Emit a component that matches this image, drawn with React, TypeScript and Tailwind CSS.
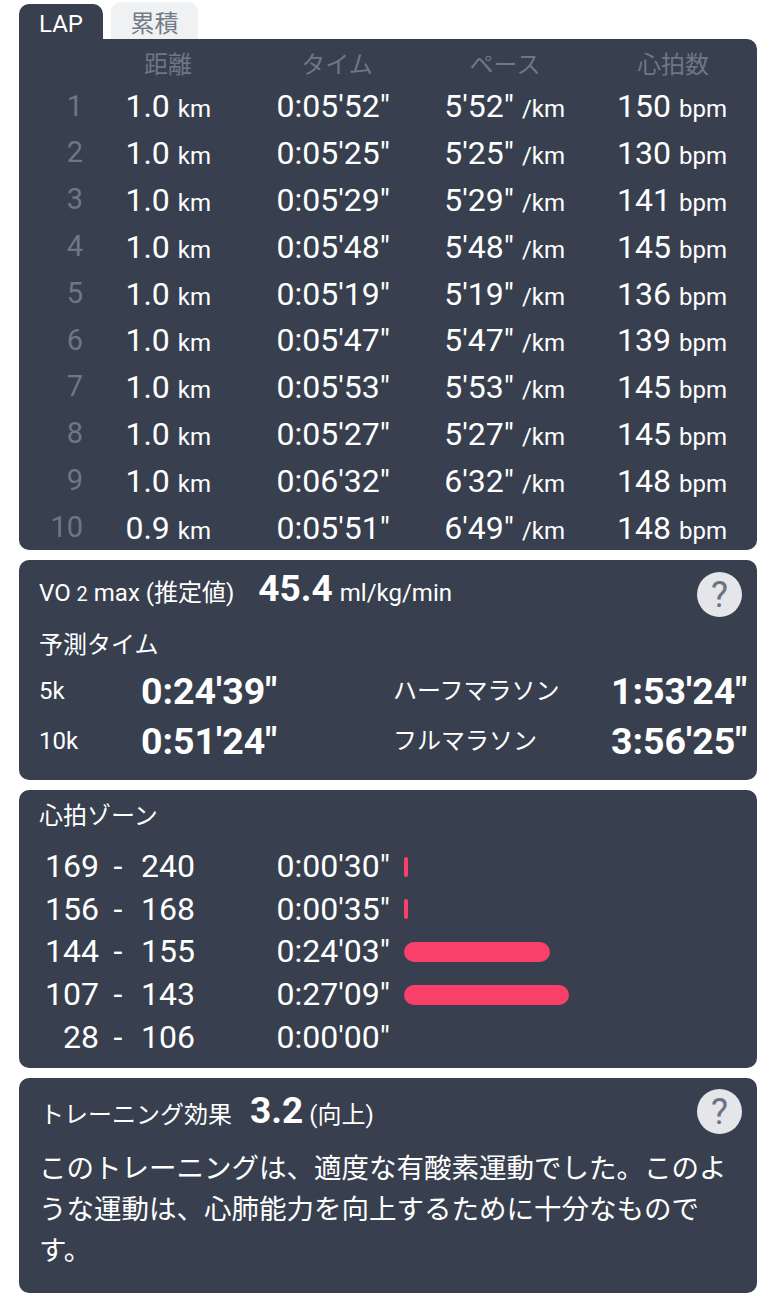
import { FC } from "react";

const laps = [
  ["1", "1.0", "0:05'52\"", "5'52\"", "150"],
  ["2", "1.0", "0:05'25\"", "5'25\"", "130"],
  ["3", "1.0", "0:05'29\"", "5'29\"", "141"],
  ["4", "1.0", "0:05'48\"", "5'48\"", "145"],
  ["5", "1.0", "0:05'19\"", "5'19\"", "136"],
  ["6", "1.0", "0:05'47\"", "5'47\"", "139"],
  ["7", "1.0", "0:05'53\"", "5'53\"", "145"],
  ["8", "1.0", "0:05'27\"", "5'27\"", "145"],
  ["9", "1.0", "0:06'32\"", "6'32\"", "148"],
  ["10", "0.9", "0:05'51\"", "6'49\"", "148"],
];

const zones = [
  { from: "169", to: "240", time: "0:00'30\"", bar: 4 },
  { from: "156", to: "168", time: "0:00'35\"", bar: 4 },
  { from: "144", to: "155", time: "0:24'03\"", bar: 146 },
  { from: "107", to: "143", time: "0:27'09\"", bar: 165 },
  { from: "28", to: "106", time: "0:00'00\"", bar: 0 },
];

const HelpButton: FC = () => (
  <div className="w-[45px] h-[45px] rounded-full bg-[#e4e6ea] flex items-center justify-center text-[36px] leading-none text-[#6b7280]">
    ?
  </div>
);

const App: FC = () => {
  return (
    <div className="w-[776px] h-[1296px] bg-white px-[19px] pt-[2px] overflow-hidden font-['Roboto','Noto_Sans_CJK_JP',sans-serif] text-white">
      {/* tabs */}
      <div className="flex items-end gap-2 h-[37px]">
        <div className="w-[84px] h-[35px] bg-[#383f4e] rounded-t-[10px] text-[24px] leading-[41px] text-center">
          LAP
        </div>
        <div className="w-[87px] h-[37px] bg-[#f0f1f3] rounded-t-[10px] text-[24px] leading-[44px] text-center text-[#737b88]">
          累積
        </div>
      </div>

      {/* lap table */}
      <div className="h-[511px] bg-[#383f4e] rounded-b-[10px] rounded-tr-[10px] pt-[8px]">
        <div className="flex h-[36px] items-center text-[24px] text-[#6d7786]">
          <div className="w-[99px]" />
          <div className="w-[100px] text-center">距離</div>
          <div className="w-[100px] ml-[69px] text-center">タイム</div>
          <div className="w-[100px] ml-[68px] text-center">ペース</div>
          <div className="w-[100px] ml-[68px] text-center">心拍数</div>
        </div>
        {laps.map(([lap, dist, time, pace, hr]) => (
          <div key={lap} className="flex h-[46.8px] items-center text-[32px] whitespace-nowrap">
            <div className="w-[64px] text-right text-[29px] text-[#6d7786]">{lap}</div>
            <div className="w-[128px] text-right">
              {dist} <span className="text-[24px]">km</span>
            </div>
            <div className="w-[179px] text-right">{time}</div>
            <div className="w-[175px] text-right">
              {pace} <span className="text-[24px]">/km</span>
            </div>
            <div className="w-[162px] text-right">
              {hr} <span className="text-[24px]">bpm</span>
            </div>
          </div>
        ))}
      </div>

      {/* VO2 max */}
      <div className="relative h-[220px] mt-[10px] bg-[#383f4e] rounded-[10px] pl-[20px] pt-[1px]">
        <div className="flex items-baseline h-[48px] text-[24px] whitespace-nowrap">
          <span>
            VO <span className="text-[20px]">2</span> max (推定値)
          </span>
          <span className="ml-[24px] text-[37px] font-bold">45.4</span>
          <span className="ml-[7px]">ml/kg/min</span>
        </div>
        <div className="absolute right-[15px] top-[12px]">
          <HelpButton />
        </div>
        <div className="mt-[18px] text-[24px] leading-[36px]">予測タイム</div>
        <div className="mt-[3px] flex h-[50px] items-center whitespace-nowrap">
          <div className="w-[102px] text-[24px]">5k</div>
          <div className="w-[252px] text-[37.5px] font-bold">0:24'39"</div>
          <div className="w-[218px] text-[24px]">ハーフマラソン</div>
          <div className="w-[136px] text-right text-[37.5px] font-bold">1:53'24"</div>
        </div>
        <div className="flex h-[50px] items-center whitespace-nowrap">
          <div className="w-[102px] text-[24px]">10k</div>
          <div className="w-[252px] text-[37.5px] font-bold">0:51'24"</div>
          <div className="w-[218px] text-[24px]">フルマラソン</div>
          <div className="w-[136px] text-right text-[37.5px] font-bold">3:56'25"</div>
        </div>
      </div>

      {/* heart rate zones */}
      <div className="h-[278px] mt-[10px] bg-[#383f4e] rounded-[10px] pl-[20px] pt-[8px]">
        <div className="text-[24px] leading-[36px]">心拍ゾーン</div>
        <div className="mt-[11px]">
          {zones.map((z) => (
            <div key={z.from} className="flex h-[42.6px] items-center text-[32px] whitespace-nowrap">
              <div className="w-[60px] text-right">{z.from}</div>
              <div className="w-[38px] text-center">-</div>
              <div className="w-[58px] text-right">{z.to}</div>
              <div className="w-[195px] text-right">{z.time}</div>
              <div className="ml-[14px] mt-[1px] h-[20px] rounded-[10px] bg-[#f8406a]" style={{ width: z.bar }} />
            </div>
          ))}
        </div>
      </div>

      {/* training effect */}
      <div className="relative h-[215px] mt-[10px] bg-[#383f4e] rounded-[10px] pl-[21px] pr-[20px] pt-[5px]">
        <div className="flex items-baseline h-[48px] text-[24px] whitespace-nowrap">
          <span>トレーニング効果</span>
          <span className="ml-[18px] text-[37px] font-bold">3.2</span>
          <span className="ml-[6px]">(向上)</span>
        </div>
        <div className="absolute right-[15px] top-[11px]">
          <HelpButton />
        </div>
        <p className="mt-[17px] -ml-px text-[27.5px] leading-[41px]">
          このトレーニングは、適度な有酸素運動でした。このような運動は、心肺能力を向上するために十分なものです。
        </p>
      </div>
    </div>
  );
};

export default App;
